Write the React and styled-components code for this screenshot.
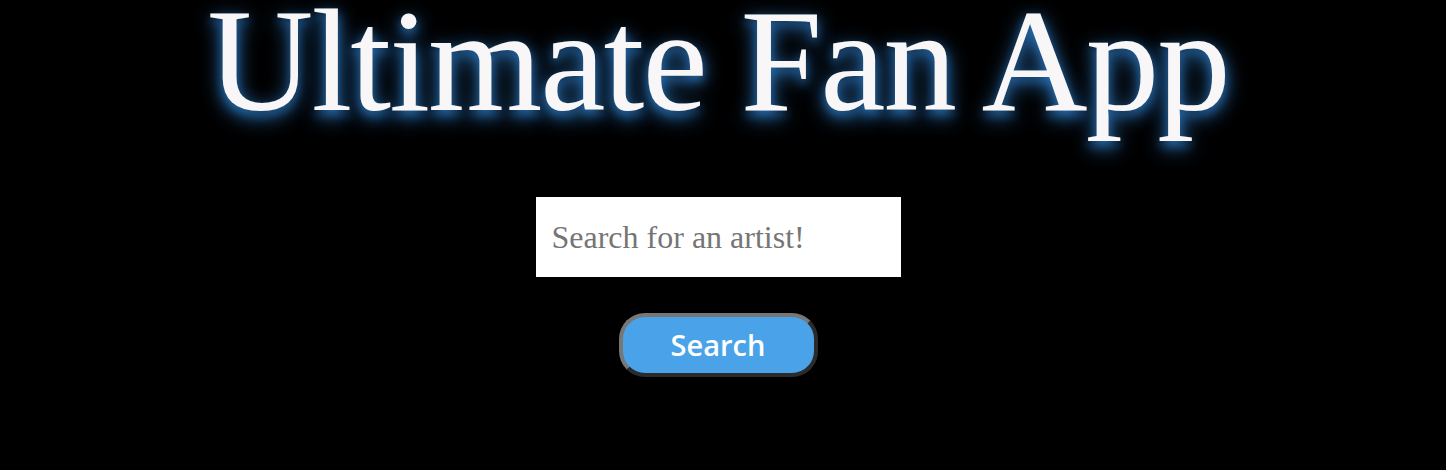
import React from 'react';
import styled, { createGlobalStyle } from 'styled-components';

const GlobalStyle = createGlobalStyle`
  html, body {
    margin: 0;
    padding: 0;
    background-color: #000;
  }
  body {
    font-family: "Liberation Serif", "Times New Roman", serif;
  }
`;

const Page = styled.div`
  display: flex;
  flex-direction: column;
  align-items: center;
  min-height: 470px;
  padding-right: 10px;
  background-color: #000;
`;

const Title = styled.h1`
  margin: 0;
  padding-top: 3px;
  font-family: "Liberation Serif", "Times New Roman", serif;
  font-size: 147px;
  font-weight: normal;
  letter-spacing: -2px;
  line-height: 115px;
  color: #f8f6f6;
  text-shadow: 0 6px 20px #2f7fcc, 0 5px 10px rgba(47, 127, 204, 0.6);
  white-space: nowrap;
`;

const SearchForm = styled.form`
  display: flex;
  flex-direction: column;
  align-items: center;
  gap: 36px;
  margin-top: 79px;
`;

const SearchInput = styled.input`
  box-sizing: border-box;
  width: 365px;
  height: 80px;
  padding: 0 16px;
  border: none;
  outline: none;
  background-color: #fff;
  font-family: "Liberation Serif", "Times New Roman", serif;
  font-size: 32px;
  color: #222;

  &::placeholder {
    color: #757575;
  }
`;

const SearchButton = styled.button`
  box-sizing: border-box;
  width: 199px;
  height: 64px;
  padding: 0 0 2px;
  border-width: 4px;
  border-style: solid;
  border-color: #777 #2b2b2b #2b2b2b #777;
  border-radius: 26px;
  background-color: #4aa3e8;
  color: #fff;
  font-family: "Open Sans", "Noto Sans", sans-serif;
  font-size: 29px;
  font-weight: 600;
  cursor: pointer;
`;

const App = () => {
  return (
    <Page>
      <GlobalStyle />
      <Title>Ultimate Fan App</Title>
      <SearchForm onSubmit={(e) => e.preventDefault()}>
        <SearchInput type="text" placeholder="Search for an artist!" />
        <SearchButton type="submit">Search</SearchButton>
      </SearchForm>
    </Page>
  );
};

export default App;
